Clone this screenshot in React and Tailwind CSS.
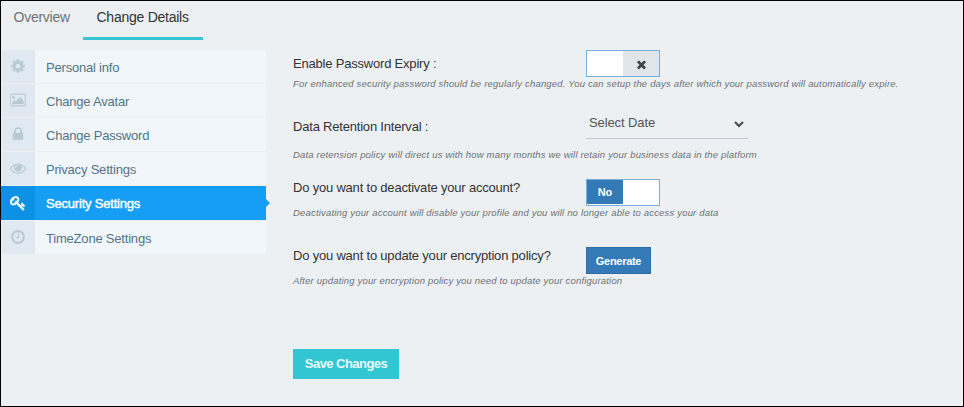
import React from "react";

const ICONS = {
  cog: "M1152 896q0-106-75-181t-181-75-181 75-75 181 75 181 181 75 181-75 75-181zm512-109v222q0 12-8 23t-20 13l-185 28q-19 54-39 91 35 50 107 138 10 12 10 25t-9 23q-27 37-99 108t-94 71q-12 0-26-9l-138-108q-44 23-91 38-16 136-29 186-7 28-36 28h-222q-14 0-24.5-8.5t-11.5-21.5l-28-184q-49-16-90-37l-141 107q-10 9-25 9-14 0-25-11-126-114-165-168-7-10-7-23 0-12 8-23 15-21 51-66.5t54-70.5q-27-50-41-99l-183-27q-13-2-21-12.5t-8-23.5v-222q0-12 8-23t19-13l186-28q14-46 39-92-40-57-107-138-10-12-10-24 0-10 9-23 26-36 98.5-107.5t94.5-71.5q13 0 26 10l138 107q44-23 91-38 16-136 29-186 7-28 36-28h222q14 0 24.5 8.5t11.5 21.5l28 184q49 16 90 37l142-107q9-9 24-9 13 0 25 10 129 119 165 170 7 8 7 22 0 12-8 23-15 21-51 66.5t-54 70.5q26 50 41 98l183 28q13 2 21 12.5t8 23.5z",
  picture: "M576 576q0 80-56 136t-136 56-136-56-56-136 56-136 136-56 136 56 56 136zm1024 384v448h-1408v-192l320-320 160 160 512-512zm96-704h-1600q-13 0-22.5 9.5t-9.5 22.5v1216q0 13 9.5 22.5t22.5 9.5h1600q13 0 22.5-9.5t9.5-22.5v-1216q0-13-9.5-22.5t-22.5-9.5zm160 32v1216q0 66-47 113t-113 47h-1600q-66 0-113-47t-47-113v-1216q0-66 47-113t113-47h1600q66 0 113 47t47 113z",
  lock: "M640 768h512v-192q0-106-75-181t-181-75-181 75-75 181v192zm832 96v576q0 40-28 68t-68 28h-960q-40 0-68-28t-28-68v-576q0-40 28-68t68-28h32v-192q0-184 132-316t316-132 316 132 132 316v192h32q40 0 68 28t28 68z",
  eye: "M1664 960q-152-236-381-353 61 104 61 225 0 185-131.5 316.5t-316.5 131.5-316.5-131.5-131.5-316.5q0-121 61-225-229 117-381 353 133 205 333.5 326.5t434.5 121.5 434.5-121.5 333.5-326.5zm-720-384q0-20-14-34t-34-14q-125 0-214.5 89.5t-89.5 214.5q0 20 14 34t34 14 34-14 14-34q0-86 61-147t147-61q20 0 34-14t14-34zm848 384q0 34-20 69-140 230-376.5 368.5t-499.5 138.5-499.5-139-376.5-368q-20-35-20-69t20-69q140-229 376.5-368t499.5-139 499.5 139 376.5 368q20 35 20 69z",
  key: "M832 512q0-80-56-136t-136-56-136 56-56 136q0 42 19 83-41-19-83-19-80 0-136 56t-56 136 56 136 136 56 136-56 56-136q0-42-19-83 41 19 83 19 80 0 136-56t56-136zm851 704q0 17-49 66t-66 49q-9 0-28.5-16t-36.5-33-38.5-40-24.5-26l-96 96 220 220q28 28 28 68 0 42-39 81t-81 39q-40 0-68-28l-671-671q-176 131-365 131-163 0-265.5-102.5t-102.5-265.5q0-160 95-313t248-248 313-95q163 0 265.5 102.5t102.5 265.5q0 189-131 365l355 355 96-96q-3-3-26-24.5t-40-38.5-33-36.5-16-28.5q0-17 49-66t66-49q13 0 23 10 6 6 46 44.5t82 79.5 86.5 86 73 78 28.5 41z",
  clock: "M1024 544v448q0 14-9 23t-23 9h-320q-14 0-23-9t-9-23v-64q0-14 9-23t23-9h224v-352q0-14 9-23t23-9h64q14 0 23 9t9 23zm416 352q0-148-73-273t-198-198-273-73-273 73-198 198-73 273 73 273 198 198 273 73 273-73 198-198 73-273zm224 0q0 209-103 385.5t-279.5 279.5-385.5 103-385.5-103-279.5-279.5-103-385.5 103-385.5 279.5-279.5 385.5-103 385.5 103 279.5 279.5 103 385.5z",
  times: "M1490 1322q0 40-28 68l-136 136q-28 28-68 28t-68-28l-294-294-294 294q-28 28-68 28t-68-28l-136-136q-28-28-28-68t28-68l294-294-294-294q-28-28-28-68t28-68l136-136q28-28 68-28t68 28l294 294 294-294q28-28 68-28t68 28l136 136q28 28 28 68t-28 68l-294 294 294 294q28 28 28 68z",
};

function Icon({ name, className, viewBox = "0 0 1792 1792" }) {
  return (
    <svg viewBox={viewBox} fill="currentColor" className={className}>
      <path d={ICONS[name]} />
    </svg>
  );
}

const MENU = [
  { icon: "cog", label: "Personal info" },
  { icon: "picture", label: "Change Avatar", viewBox: "-32 0 1920 1792" },
  { icon: "lock", label: "Change Password" },
  { icon: "eye", label: "Privacy Settings" },
  { icon: "key", label: "Security Settings", active: true },
  { icon: "clock", label: "TimeZone Settings" },
];

function MenuItem({ icon, label, active, viewBox }) {
  return (
    <li
      className={
        active
          ? "relative -ml-px mb-px flex h-[34px] bg-[#169ef4] text-white"
          : "mb-px flex h-[33px] bg-[#f0f6fa] text-[#557386]"
      }
    >
      <span
        className={
          active
            ? "flex w-[34px] items-center justify-center bg-[#0c91e5]"
            : "flex w-[33px] items-center justify-center bg-[#e0e9f1] text-[#b9cad5]"
        }
      >
        <Icon
          name={icon}
          viewBox={viewBox}
          className={active ? "mr-px h-4 w-4 stroke-current stroke-[40]" : "mr-px mb-px h-4 w-4"}
        />
      </span>
      <span
        className={
          active
            ? "pl-[11px] text-[13px] leading-[35px] tracking-[-0.2px] [-webkit-text-stroke:0.4px]"
            : "pl-[11px] text-[13px] leading-[35px] tracking-[-0.2px]"
        }
      >
        {label}
      </span>
      {active && (
        <span className="absolute top-[13px] left-full h-0 w-0 border-y-4 border-l-4 border-y-transparent border-l-[#169ef4]" />
      )}
    </li>
  );
}

function Field({ label, hint, className, labelClass, hintClass, children }) {
  return (
    <div className={className}>
      <div className="flex h-[27px]">
        <div className={`w-[293px] text-[13px] leading-[27px] tracking-[-0.2px] text-[#333] ${labelClass || ""}`}>{label}</div>
        {children}
      </div>
      <p className={`h-[13px] text-[9.5px] leading-[12px] tracking-[0.18px] whitespace-nowrap text-[#6c7175] italic ${hintClass || ""}`}>
        {hint}
      </p>
    </div>
  );
}

export default function App() {
  return (
    <div className="h-[407px] w-[964px] overflow-hidden border border-black bg-[#ecf0f3] font-['Liberation_Sans',Arial,sans-serif]">
      <nav className="flex h-[39px] text-[14px] leading-[32px] tracking-[-0.25px]">
        <a className="w-[82px] pl-[12.5px] text-[#737373]">Overview</a>
        <a className="w-[120px] border-b-3 border-[#36c6d3] pl-[13.5px] text-[#333]">Change Details</a>
      </nav>

      <div className="flex pt-[10px]">
        <ul className="ml-px w-[264px]">
          {MENU.map((item) => (
            <MenuItem key={item.label} {...item} />
          ))}
        </ul>

        <main className="ml-[27px]">
          <Field
            label="Enable Password Expiry :"
            hint="For enhanced security password should be regularly changed. You can setup the days after which your password will automatically expire."
            hintClass="pt-px"
          >
            <div className="flex w-[74px] border border-[#76aedb]">
              <span className="w-9 bg-white" />
              <span className="flex flex-1 items-center justify-center bg-[#e0e5ec] text-[#444]">
                <Icon name="times" className="mt-0.5 h-[13px] w-[13px]" />
              </span>
            </div>
          </Field>

          <Field
            className="mt-[22px]"
            label="Data Retention Interval :"
            labelClass="pt-[1px]"
            hint="Data retension policy will direct us with how many months we will retain your business data in the platform"
            hintClass="pt-[10px]"
          >
            <div className="flex w-[162px] justify-between border-b border-[#c2cad8] pl-[3px] text-[13px] leading-[21px] tracking-[-0.1px] text-[#555]">
              <span>Select Date</span>
              <svg viewBox="0 0 10 7" className="mt-[9px] mr-1 h-[7px] w-[10px]" fill="none" stroke="#4a4a4a" strokeWidth="2">
                <path d="M1 1l4 4 4-4" />
              </svg>
            </div>
          </Field>

          <Field
            className="mt-[27px]"
            label="Do you want to deactivate your account?"
            labelClass="-mt-[5px]"
            hint="Deactivating your account will disable your profile and you will no longer able to access your data"
            hintClass="pt-px"
          >
            <div className="flex w-[74px] border border-[#76aedb] bg-white">
              <span className="mb-px w-9 bg-[#337ab7] text-center text-[11px] leading-[24px] font-bold text-white">No</span>
            </div>
          </Field>

          <Field
            className="mt-[28px]"
            label="Do you want to update your encryption policy?"
            labelClass="-mt-[5px]"
            hint="After updating your encryption policy you need to update your configuration"
            hintClass="pt-px"
          >
            <button className="w-[65px] border border-[#2e6da4] bg-[#337ab7] text-[11px] leading-[26px] font-bold tracking-[-0.3px] text-white">
              Generate
            </button>
          </Field>

          <button className="mt-[62px] h-[30px] w-[106px] bg-[#32c5d2] text-[13px] font-bold tracking-[-0.55px] text-[#e8fbfc]">
            Save Changes
          </button>
        </main>
      </div>
    </div>
  );
}
